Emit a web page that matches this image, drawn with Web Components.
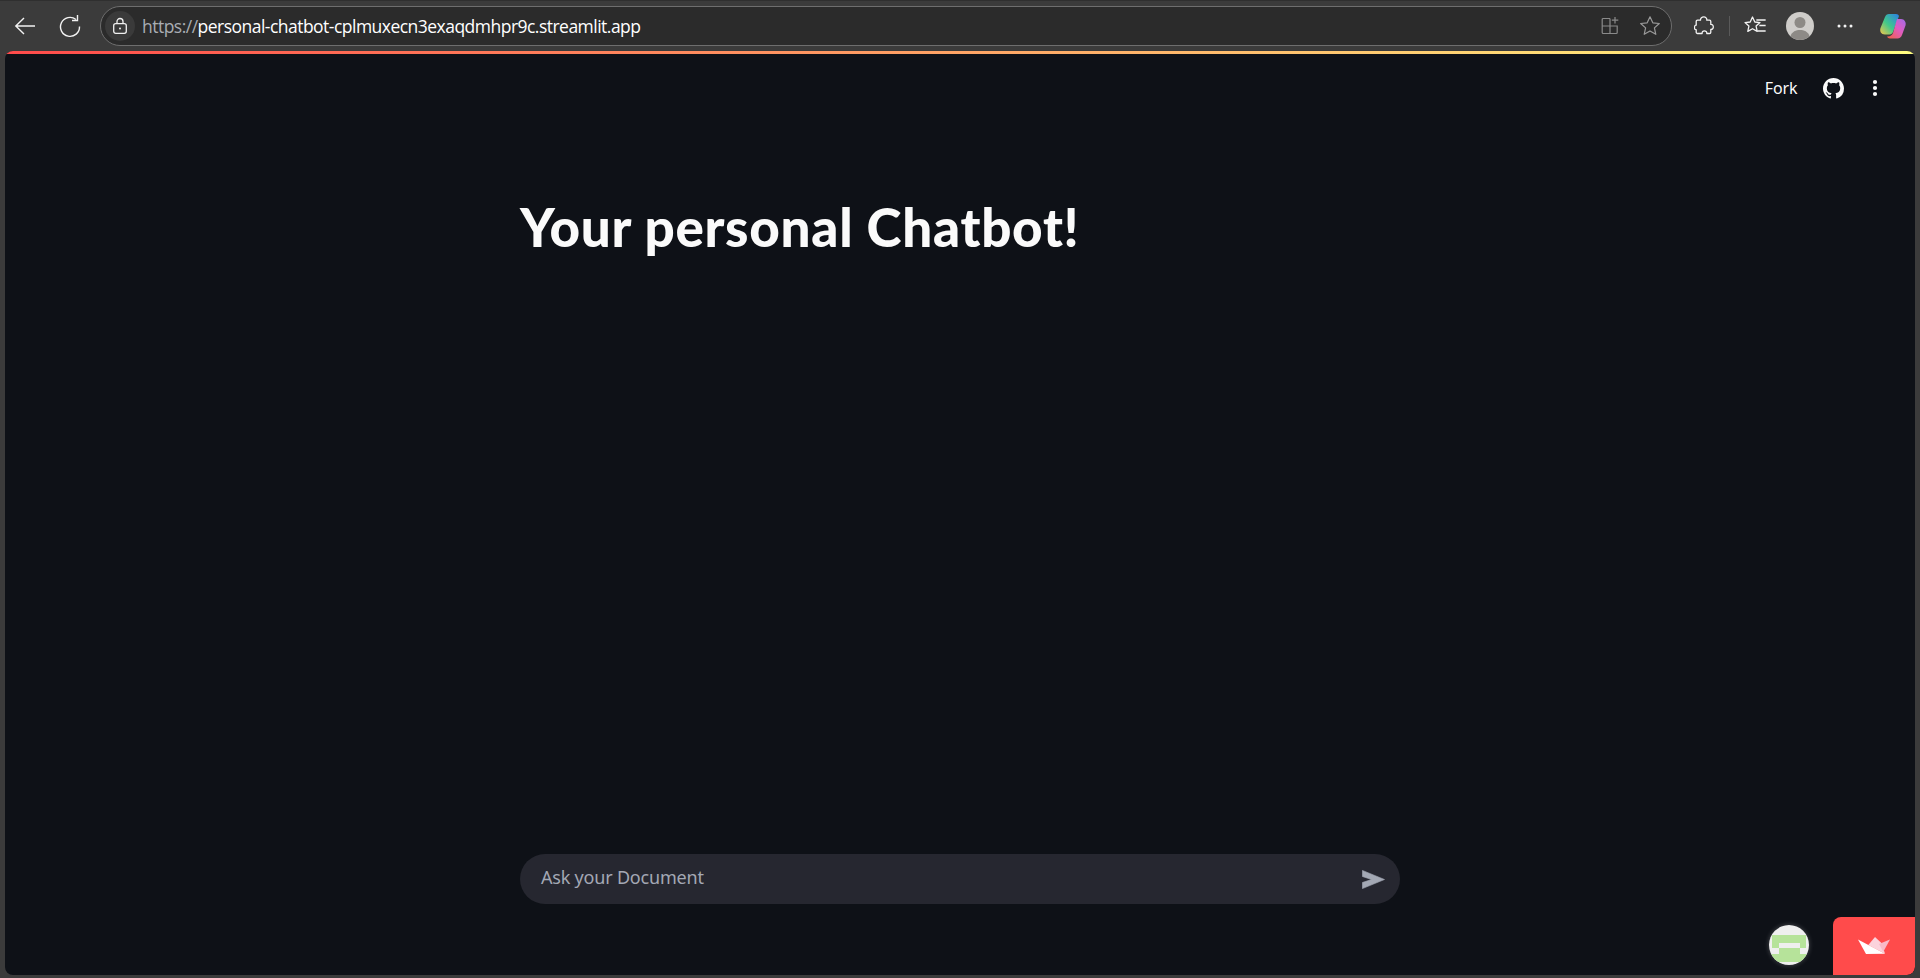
<!DOCTYPE html>
<html lang="en">
<head>
<meta charset="utf-8">
<title>Your personal Chatbot!</title>
<style>
  html, body { margin: 0; height: 100%; background: #3b3b3b; overflow: hidden; }
  body { font-family: "Noto Sans", "Open Sans", sans-serif; }
</style>
</head>
<body>
<browser-window>
  <browser-bar slot="bar" host-part="personal-chatbot-cplmuxecn3exaqdmhpr9c.streamlit.app"></browser-bar>
  <streamlit-app>
    <app-header slot="header"></app-header>
    <page-title slot="main">Your personal Chatbot!</page-title>
    <chat-input slot="footer" placeholder="Ask your Document"></chat-input>
    <viewer-badges slot="badges"></viewer-badges>
  </streamlit-app>
</browser-window>

<script>
class BrowserWindow extends HTMLElement {
    connectedCallback() {
        this.attachShadow({ mode: 'open' });
        this.shadowRoot.innerHTML = `
            <style>
                :host {
                    display: flex;
                    flex-direction: column;
                    height: 978px;
                    box-sizing: border-box;
                    padding: 0 5px 3px;
                }
                .frame { flex: 1; min-height: 0; display: flex; }
                ::slotted(streamlit-app) { flex: 1; }
            </style>
            <slot name="bar"></slot>
            <div class="frame"><slot></slot></div>
        `;
    }
}

class BrowserBar extends HTMLElement {
    connectedCallback() {
        const host = this.getAttribute('host-part');
        this.attachShadow({ mode: 'open' });
        this.shadowRoot.innerHTML = `
            <style>
                :host {
                    display: flex;
                    align-items: center;
                    height: 51px;
                    margin: 0 -5px;
                    box-sizing: border-box;
                    padding: 0 0 1px 0;
                    border-top: 1px solid #2f2f2f;
                    color: #f2f2f2;
                }
                svg { display: block; flex: none; }
                .nav { margin-left: 13px; }
                .reload { margin-left: 21px; }
                .address {
                    flex: none;
                    width: 1572px;
                    height: 40px;
                    box-sizing: border-box;
                    margin-left: 18px;
                    display: flex;
                    align-items: center;
                    padding-left: 4px;
                    background: #2b2b2b;
                    border: 1px solid #6e6e6e;
                    border-radius: 20px;
                }
                .lock {
                    width: 30px;
                    height: 30px;
                    border-radius: 50%;
                    background: #3a3a3a;
                    display: flex;
                    align-items: center;
                    justify-content: center;
                    flex: none;
                }
                .url {
                    margin-left: 7px;
                    font: 17.5px "Open Sans", "Noto Sans", sans-serif;
                    letter-spacing: -0.52px;
                    white-space: nowrap;
                    color: #fff;
                }
                .url span { color: #a9adb3; }
                .end { margin-left: auto; display: flex; align-items: center; gap: 19px; padding-right: 10px; }
                .tools { display: flex; align-items: center; margin-left: 22px; }
                .divider { width: 1px; height: 20px; background: #5a5a5a; margin: 0 13px 0 15px; }
                .profile { margin-left: 19px; }
                .more { margin-left: 23px; }
                .copilot { margin-left: 26px; }
            </style>
            <svg class="nav" width="24" height="24" viewBox="0 0 24 24" fill="none" stroke="#f2f2f2" stroke-width="1.4">
                <path d="M22 12H3M11 4l-8.200 8 8.200 8"/>
            </svg>
            <svg class="reload" width="24" height="24" viewBox="0 0 24 24" fill="none" stroke="#f2f2f2" stroke-width="1.4">
                <path d="M18 5.500A9.500 9.500 0 1 0 21.500 12.500"/><path d="M19.500 1v5.500h-5.500"/>
            </svg>
            <div class="address">
                <div class="lock">
                    <svg width="18" height="18" viewBox="0 0 18 18" fill="none" stroke="#f0f0f0" stroke-width="1.3">
                        <rect x="2.700" y="6.700" width="12.600" height="9.600" rx="2"/>
                        <path d="M6 6.500V4.500a3 3 0 0 1 6 0v2"/>
                        <circle cx="9" cy="11.500" r="1" fill="#f0f0f0" stroke="none"/>
                    </svg>
                </div>
                <div class="url"><span>https://</span>${host}</div>
                <div class="end">
                    <svg width="20" height="20" viewBox="0 0 20 20" fill="none" stroke="#8a8a8a" stroke-width="1.2">
                        <path d="M10 2.500H3.200a1 1 0 0 0-1 1v13a1 1 0 0 0 1 1h13a1 1 0 0 0 1-1V10H2.200M10 2.500v15"/>
                        <path d="M15 1v6.500M11.800 4.200h6.500"/>
                    </svg>
                    <svg width="22" height="22" viewBox="0 0 22 22" fill="none" stroke="#9a9a9a" stroke-width="1.2" stroke-linejoin="round">
                        <path d="M11 1.800l2.800 6 6.500.7-4.900 4.400 1.400 6.400L11 15.900l-5.800 3.400 1.400-6.400-4.900-4.400 6.500-.7z"/>
                    </svg>
                </div>
            </div>
            <div class="tools">
                <svg width="20" height="20" viewBox="0 0 20 20" fill="none" stroke="#f2f2f2" stroke-width="1.3" stroke-linejoin="round">
                    <path d="M6.500 4.200C6.300 2.200 8 .9 9.800.9s3.300 1.500 3 3.300h2.700a1.300 1.300 0 0 1 1.300 1.300v2.900c1.800-.2 2.500 1.200 2.500 2.500s-.9 2.700-2.500 2.500v2.800a1.300 1.300 0 0 1-1.300 1.300h-2.700c.2-1.900-1.100-2.700-2.400-2.700s-2.500 1-2.300 2.700H3.500a1.300 1.300 0 0 1-1.300-1.300v-2.500C.5 13.800.5 12.600.5 11.400s.5-2.400 1.700-2.300V5.500a1.300 1.300 0 0 1 1.300-1.300z"/>
                </svg>
                <div class="divider"></div>
                <svg width="24" height="22" viewBox="0 0 24 22" fill="none" stroke="#f2f2f2" stroke-width="1.3" stroke-linejoin="round">
                    <path d="M9.500 2l2.300 5 5.200.6-3.900 3.500 1.100 5.300-4.700-2.700-4.700 2.700 1.100-5.300L2 7.600l5.200-.6z"/>
                    <path d="M14 5h8M17 10.500h5M15 16h7" stroke-linecap="square"/>
                </svg>
                <svg class="profile" width="28" height="28" viewBox="0 0 28 28">
                    <circle cx="14" cy="14" r="14" fill="#cfcdca"/>
                    <circle cx="14" cy="10.500" r="5.500" fill="#8d8a86"/>
                    <path d="M4.500 24.200C6 19.500 10 18 14 18s8 1.500 9.500 6.200A14 14 0 0 1 4.500 24.200z" fill="#8d8a86"/>
                </svg>
                <svg class="more" width="16" height="4" viewBox="0 0 16 4" fill="#f2f2f2">
                    <circle cx="2" cy="2" r="1.500"/><circle cx="8" cy="2" r="1.500"/><circle cx="14" cy="2" r="1.500"/>
                </svg>
                <svg class="copilot" width="28" height="26" viewBox="0 0 28 26">
                    <defs>
                        <linearGradient id="cpA" x1="0" y1="1" x2="1" y2="0">
                            <stop offset="0" stop-color="#f6c64a"/><stop offset=".45" stop-color="#41c98a"/><stop offset="1" stop-color="#2b7fe8"/>
                        </linearGradient>
                        <linearGradient id="cpB" x1="0" y1="1" x2="1" y2="0">
                            <stop offset="0" stop-color="#f2613f"/><stop offset=".55" stop-color="#e05cc0"/><stop offset="1" stop-color="#a06be8"/>
                        </linearGradient>
                    </defs>
                    <path d="M10 1h7c1.500 0 2.500.8 3 2l-6 16c-.6 1.600-1.700 2.500-3.500 2.500H6C2 21.500.5 18 1.500 15L6 4c.8-2 2-3 4-3z" fill="url(#cpA)"/>
                    <path d="M18 6h4c3.500 0 5.500 3.500 4.500 6.500L23 22c-.8 2.300-2.300 3.500-4.500 3.500H11c-1.500 0-2.500-1-3-2 3 .3 5-1 6-3.500z" fill="url(#cpB)"/>
                </svg>
            </div>
        `;
    }
}

class StreamlitApp extends HTMLElement {
    connectedCallback() {
        this.attachShadow({ mode: 'open' });
        this.shadowRoot.innerHTML = `
            <style>
                :host {
                    display: flex;
                    flex-direction: column;
                    position: relative;
                    background: #0e1117;
                    color: #fafafa;
                    border-radius: 8px;
                    overflow: hidden;
                }
                .deco {
                    height: 3px;
                    flex: none;
                    background: linear-gradient(90deg, #ff4b4b, #fffd80);
                }
                main {
                    flex: 1;
                    min-height: 0;
                    width: 880px;
                    margin-left: 515px;
                }
                footer {
                    width: 880px;
                    margin-left: 515px;
                    padding-bottom: 71px;
                }
            </style>
            <div class="deco"></div>
            <slot name="header"></slot>
            <main><slot name="main"></slot></main>
            <footer><slot name="footer"></slot></footer>
            <slot name="badges"></slot>
        `;
    }
}

class AppHeader extends HTMLElement {
    connectedCallback() {
        this.attachShadow({ mode: 'open' });
        this.shadowRoot.innerHTML = `
            <style>
                :host {
                    display: flex;
                    align-items: center;
                    justify-content: flex-end;
                    height: 62px;
                    padding: 6px 37px 0 0;
                    box-sizing: border-box;
                }
                span { font: 16px "Noto Sans", sans-serif; color: #fafafa; letter-spacing: -0.1px; }
                svg { display: block; }
                .gh { margin-left: 25px; }
                .menu { margin-left: 28.5px; }
            </style>
            <span>Fork</span>
            <svg class="gh" width="21" height="21" viewBox="0 0 16 16" fill="#fafafa">
                <path d="M8 0C3.580 0 0 3.580 0 8c0 3.540 2.290 6.530 5.470 7.590.4.070.55-.17.55-.38 0-.19-.01-.82-.01-1.490-2.010.37-2.530-.49-2.690-.94-.09-.23-.48-.94-.82-1.130-.28-.15-.68-.52-.01-.53.63-.01 1.080.58 1.230.82.720 1.210 1.870.87 2.330.66.070-.52.280-.87.510-1.070-1.780-.2-3.640-.89-3.640-3.950 0-.87.310-1.590.820-2.150-.080-.2-.360-1.020.080-2.120 0 0 .670-.21 2.200.820.640-.180 1.320-.270 2-.270s1.360.090 2 .270c1.530-1.040 2.200-.820 2.200-.820.440 1.100.160 1.920.080 2.120.510.560.820 1.270.820 2.150 0 3.070-1.870 3.750-3.650 3.950.290.250.540.730.540 1.480 0 1.070-.010 1.930-.010 2.200 0 .210.150.460.550.380A8.010 8.010 0 0 0 16 8c0-4.420-3.580-8-8-8z"/>
            </svg>
            <svg class="menu" width="6" height="18" viewBox="0 0 6 18" fill="#fafafa">
                <circle cx="3" cy="3" r="2.100"/><circle cx="3" cy="9" r="2.100"/><circle cx="3" cy="15" r="2.100"/>
            </svg>
        `;
    }
}

class PageTitle extends HTMLElement {
    connectedCallback() {
        this.attachShadow({ mode: 'open' });
        this.shadowRoot.innerHTML = `
            <style>
                :host { display: block; padding-top: 76px; }
                h1 {
                    margin: 0;
                    font: 900 53px/70px "Lato", "Noto Sans", sans-serif;
                    letter-spacing: 0.7px;
                    color: #fafafa;
                    white-space: nowrap;
                }
            </style>
            <h1><slot></slot></h1>
        `;
    }
}

class ChatInput extends HTMLElement {
    connectedCallback() {
        this.attachShadow({ mode: 'open' });
        this.shadowRoot.innerHTML = `
            <style>
                :host {
                    display: flex;
                    align-items: center;
                    height: 50px;
                    padding: 0 15px 0 21px;
                    background: #262730;
                    border-radius: 25px;
                }
                .text { flex: 1; font: 18px "Noto Sans", sans-serif; letter-spacing: -0.2px; color: #a3a8b4; padding-bottom: 4px; }
                svg { display: block; }
            </style>
            <div class="text">${this.getAttribute('placeholder')}</div>
            <svg width="23" height="19" viewBox="0 0 23 19" fill="#a3a8b4" stroke="#a3a8b4" stroke-width=".6" stroke-linejoin="round">
                <path d="M.4.4L22.500 9.500.4 18.600V12.500L9.500 9.500.4 6.500z"/>
            </svg>
        `;
    }
}

class ViewerBadges extends HTMLElement {
    connectedCallback() {
        this.attachShadow({ mode: 'open' });
        this.shadowRoot.innerHTML = `
            <style>
                :host { position: absolute; right: 0; bottom: 0; display: flex; align-items: flex-end; }
                .avatar {
                    width: 40px;
                    height: 40px;
                    border-radius: 50%;
                    overflow: hidden;
                    margin: 0 24px 10px 0;
                    box-shadow: 0 0 5px rgba(255,255,255,.25);
                    display: block;
                }
                .logo {
                    width: 82px;
                    height: 58px;
                    background: #ff4b4b;
                    border-radius: 8px 0 8px 0;
                    display: flex;
                    align-items: center;
                    justify-content: center;
                }
                svg { display: block; }
            </style>
            <svg class="avatar" width="40" height="40" viewBox="0 0 40 40">
                <rect width="40" height="40" fill="#efefef"/>
                <rect x="3" y="10" width="34" height="8" fill="#b6e39a"/>
                <rect x="3" y="18" width="7" height="5" fill="#b6e39a"/>
                <rect x="31" y="18" width="6" height="5" fill="#b6e39a"/>
                <rect x="10" y="23" width="21" height="6" fill="#b6e39a"/>
                <rect x="0" y="29" width="40" height="8" fill="#b6e39a"/>
            </svg>
            <div class="logo">
                <svg width="34" height="18" viewBox="0 0 34 18">
                    <path d="M11.300 8L18 0l6.700 6.300L28 16.800z" fill="#fbd3dc"/>
                    <path d="M33 2.500L22 7l4.300 7.700z" fill="#f9b9c6"/>
                    <path d="M1 2.500L28 16.800 9 17z" fill="#fff"/>
                </svg>
            </div>
        `;
    }
}

customElements.define('browser-window', BrowserWindow);
customElements.define('browser-bar', BrowserBar);
customElements.define('streamlit-app', StreamlitApp);
customElements.define('app-header', AppHeader);
customElements.define('page-title', PageTitle);
customElements.define('chat-input', ChatInput);
customElements.define('viewer-badges', ViewerBadges);
</script>
</body>
</html>
